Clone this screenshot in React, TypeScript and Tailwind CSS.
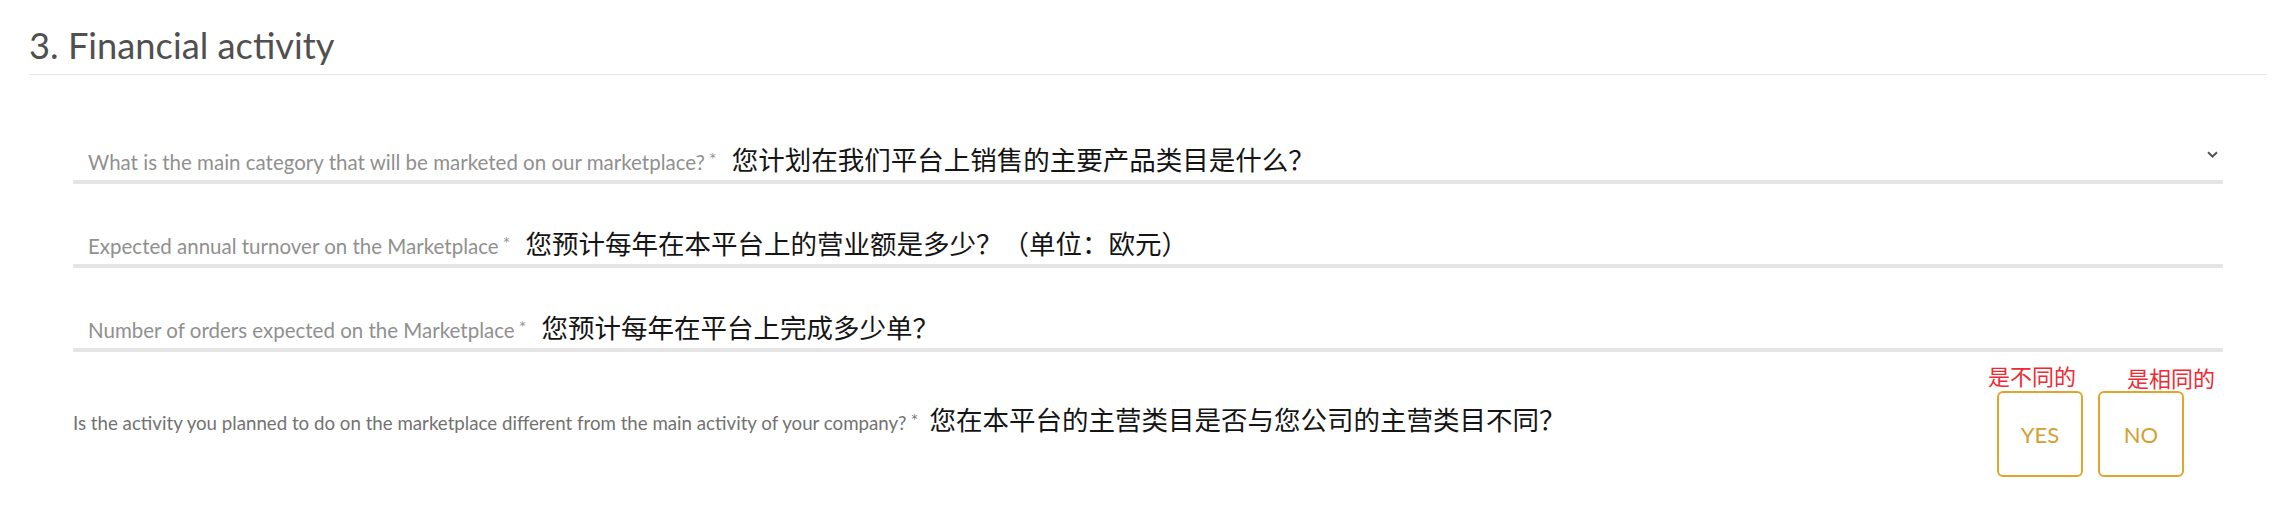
import React from "react";

function Chevron() {
  return (
    <svg width="11" height="7" viewBox="0 0 11 7" className="block">
      <path d="M1 1.2 L5.5 5.5 L10 1.2" fill="none" stroke="#555" strokeWidth="2" />
    </svg>
  );
}

type FieldProps = { label: string; zh: string; select?: boolean };

function Field({ label, zh, select }: FieldProps) {
  return (
    <div className="relative h-[84px] flex items-end pb-[6px] pl-[15px] border-b-4 border-[#e5e5e5]">
      <div className="flex items-baseline">
        <span className="font-['Lato',sans-serif] text-[20.5px] leading-none text-[#909090] whitespace-nowrap">
          {label}
          <span className="font-['DejaVu_Sans',sans-serif] text-[12px] ml-[5px] align-[8px]">*</span>
        </span>
        <span className="ml-[16px] font-['Noto_Sans_CJK_SC','Noto_Sans_CJK_JP',sans-serif] text-[26.5px] leading-[30px] text-[#151515] whitespace-nowrap">
          {zh}
        </span>
      </div>
      {select && (
        <div className="absolute right-[5px] top-[51px]">
          <Chevron />
        </div>
      )}
    </div>
  );
}

export default function App() {
  return (
    <div className="w-[2292px] h-[510px] bg-white pl-[29px] pr-[25px] pt-[21px] overflow-hidden">
      <h2 className="font-['Lato',sans-serif] text-[36.3px] leading-[48px] pb-[5px] text-[#505050] border-b border-[#e6e6e6]">
        3. Financial activity
      </h2>
      <div className="px-[44px] mt-[25px]">
        <Field
          select
          label="What is the main category that will be marketed on our marketplace?"
          zh="您计划在我们平台上销售的主要产品类目是什么？"
        />
        <Field
          label="Expected annual turnover on the Marketplace"
          zh="您预计每年在本平台上的营业额是多少？（单位：欧元）"
        />
        <Field
          label="Number of orders expected on the Marketplace"
          zh="您预计每年在平台上完成多少单？"
        />
        <div className="flex justify-between items-start">
          <div className="flex items-baseline mt-[52px]">
            <span className="font-['Lato',sans-serif] text-[18.7px] leading-none text-[#727272] whitespace-nowrap">
              Is the activity you planned to do on the marketplace different from the main activity of your company?
              <span className="font-['DejaVu_Sans',sans-serif] text-[12px] ml-[5px] align-[7px]">*</span>
            </span>
            <span className="ml-[12px] font-['Noto_Sans_CJK_SC','Noto_Sans_CJK_JP',sans-serif] text-[26.5px] leading-[30px] text-[#151515] whitespace-nowrap">
              您在本平台的主营类目是否与您公司的主营类目不同？
            </span>
          </div>
          <div className="flex gap-[15px] mt-[39px] mr-[39px]">
            <div className="relative">
              <span className="absolute left-[-9px] top-[-27px] font-['Noto_Sans_CJK_SC',sans-serif] text-[22px] leading-[22px] text-[#ee2a35] whitespace-nowrap">
                是不同的
              </span>
              <button className="w-[86px] h-[86px] border-2 border-[#e2a52b] rounded-[6px] flex items-center justify-center font-['Lato',sans-serif] text-[22px] text-[#d4a033]">
                YES
              </button>
            </div>
            <div className="relative">
              <span className="absolute left-[29px] top-[-25px] font-['Noto_Sans_CJK_SC',sans-serif] text-[22px] leading-[22px] text-[#ee2a35] whitespace-nowrap">
                是相同的
              </span>
              <button className="w-[86px] h-[86px] border-2 border-[#e2a52b] rounded-[6px] flex items-center justify-center font-['Lato',sans-serif] text-[22px] text-[#d4a033]">
                NO
              </button>
            </div>
          </div>
        </div>
      </div>
    </div>
  );
}
